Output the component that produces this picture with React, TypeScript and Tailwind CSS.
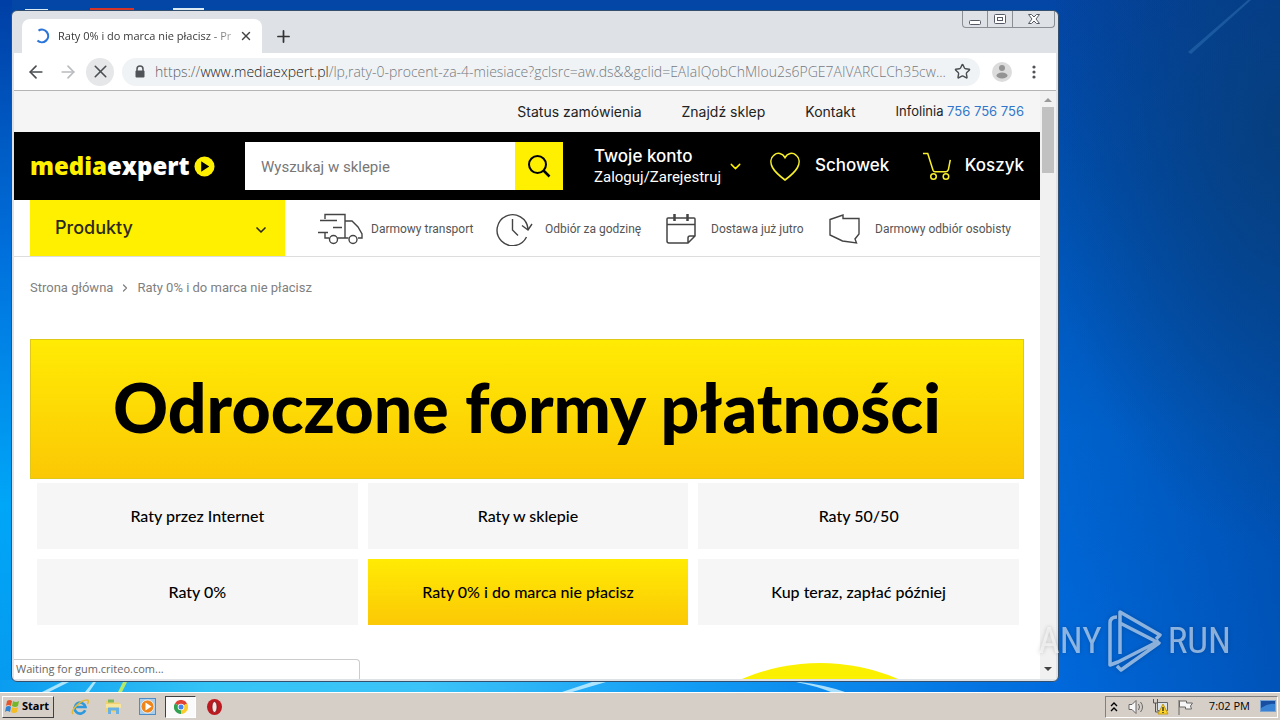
import React from 'react';
import { ArrowLeft, ArrowRight, X, Plus, Star, ChevronDown, ChevronRight } from 'lucide-react';

function Tab() {
  return (
    <div className="flex h-[34px] w-60 items-center gap-2 rounded-t-lg bg-white pl-3 pr-[9px]">
      <svg className="h-4 w-4 shrink-0" viewBox="0 0 16 16" fill="none" stroke="#2b74d8" strokeWidth="2.200">
        <path d="M4.500 2.600A6.300 6.300 0 1 1 3.500 12.500" />
      </svg>
      <span className="min-w-0 flex-1 whitespace-nowrap bg-linear-to-r from-[#333] from-85% to-[#aaa] bg-clip-text font-['Open_Sans',sans-serif] text-[11px] text-transparent">
        Raty 0% i do marca nie płacisz - Pro
      </span>
      <button aria-label="Close tab" className="shrink-0 text-[#444]">
        <X size={14} strokeWidth={2.4} />
      </button>
    </div>
  );
}

function WindowButtons() {
  return (
    <div className="flex h-[17px] rounded-b border border-t-0 border-[#8a8e95] text-[#555a66]">
      <button aria-label="Minimize" className="flex w-[25px] items-center justify-center border-r border-[#8a8e95]">
        <svg width="14" height="14" viewBox="0 0 14 14" fill="#fff" stroke="currentColor"><rect x="1.5" y="8.5" width="11" height="4" rx="1" /></svg>
      </button>
      <button aria-label="Maximize" className="flex w-[25px] items-center justify-center border-r border-[#8a8e95]">
        <svg width="14" height="14" viewBox="0 0 14 14" fill="#fff" stroke="currentColor"><rect x="1.5" y="2.5" width="11" height="9" rx="1" /><rect x="4.5" y="5.5" width="5" height="3" /></svg>
      </button>
      <button aria-label="Close" className="flex w-[41px] items-center justify-center">
        <svg width="14" height="14" viewBox="0 0 14 14" fill="#fff" stroke="currentColor"><path d="M1.5 2.5h3L7 5l2.500-2.500h3L9 7l3.500 4.500h-3L7 9l-2.500 2.500h-3L5 7z" /></svg>
      </button>
    </div>
  );
}

function Toolbar() {
  return (
    <div className="flex h-[38px] items-center border-b border-[#b4b4b4] bg-white pl-3 text-[#4a4d51]">
      <button aria-label="Back" className="flex w-8 items-center"><ArrowLeft size={20} /></button>
      <button aria-label="Forward" className="flex w-7 items-center text-[#b9bbbe]"><ArrowRight size={20} /></button>
      <button aria-label="Stop loading" className="flex h-7 w-7 items-center justify-center rounded-full bg-[#e6e7e9]"><X size={21} strokeWidth={1.8} /></button>
      <div className="ml-2 flex h-7 min-w-0 flex-1 items-center rounded-full bg-[#f0f3f5] pl-3 pr-[9px]">
        <svg width="12" height="14" viewBox="0 0 12 14" className="shrink-0">
          <path d="M3 6V4a3 3 0 0 1 6 0v2" fill="none" stroke="#505358" strokeWidth="1.500" />
          <rect x="1.500" y="5.500" width="9" height="7" rx="1" fill="#505358" />
        </svg>
        <div className="ml-[9px] min-w-0 flex-1 whitespace-nowrap font-['Open_Sans',sans-serif] text-sm font-light text-[#75797e]">
          <span className="text-[#5d6165]">https://</span>
          <span className="text-[#202124]">www.mediaexpert.pl</span>
          <span>/lp,raty-0-procent-za-4-miesiace?gclsrc=aw.ds&amp;&amp;gclid=EAIaIQobChMIou2s6PGE7AIVARCLCh35cw...</span>
        </div>
        <button aria-label="Bookmark" className="shrink-0"><Star size={17} strokeWidth={2} /></button>
      </div>
      <button aria-label="Profile" className="ml-3">
        <svg width="20" height="20" viewBox="0 0 20 20"><circle cx="10" cy="10" r="10" fill="#dcdcdc" /><circle cx="10" cy="6" r="3" fill="#949494" /><ellipse cx="10" cy="13.500" rx="5.500" ry="3" fill="#949494" /></svg>
      </button>
      <button aria-label="Menu" className="ml-[18px] mr-[18px] flex w-2 justify-center">
        <svg width="4" height="14" viewBox="0 0 4 14" fill="#505358"><circle cx="2" cy="2" r="1.600" /><circle cx="2" cy="7" r="1.600" /><circle cx="2" cy="12" r="1.600" /></svg>
      </button>
    </div>
  );
}

function TopLinks() {
  return (
    <nav className="flex h-[41px] items-center justify-end gap-10 bg-[#f5f5f5] pr-4 font-[Inter,sans-serif] text-sm text-[#222]">
      <a href="#status">Status zamówienia</a>
      <a href="#sklep">Znajdź sklep</a>
      <a href="#kontakt">Kontakt</a>
      <span className="text-[13px]">Infolinia <a href="tel:756756756" className="text-[#3077cc]">756 756 756</a></span>
    </nav>
  );
}

function Header() {
  return (
    <header className="flex h-[68px] items-center bg-black px-4 text-white">
      <a href="#home" className="flex w-[215px] items-center gap-1 font-['Open_Sans',sans-serif] text-2xl font-extrabold leading-8">
        <span><span className="text-[#fff000]">media</span>expert</span>
        <svg width="21" height="21" viewBox="0 0 22 22"><circle cx="11" cy="11" r="10.500" fill="#fff000" /><path d="M7.500 5.500v11L16 11z" fill="#000" /></svg>
      </a>
      <form className="flex h-12 flex-1 bg-white" onSubmit={(e) => e.preventDefault()}>
        <input aria-label="Wyszukaj w sklepie" placeholder="Wyszukaj w sklepie" className="min-w-0 flex-1 px-4 pt-0.5 font-[Roboto,sans-serif] text-[15px] text-black outline-none placeholder:text-[#777]" />
        <button aria-label="Szukaj" className="flex w-12 items-center justify-center bg-[#fff000] text-black">
          <svg width="24" height="24" viewBox="0 0 24 24" fill="none" stroke="currentColor" strokeWidth="2"><circle cx="10.500" cy="10.500" r="8.500" /><path d="m16.500 16.500 6 6" strokeWidth="2.500" /></svg>
        </button>
      </form>
      <a href="#konto" className="ml-[31px] flex w-[176px] items-center gap-1">
        <span className="flex w-[129px] flex-col font-[Inter,sans-serif]">
          <span className="text-[17px] font-medium leading-[21px]">Twoje konto</span>
          <span className="font-[Roboto,sans-serif] text-[15px] leading-5">Zaloguj/Zarejestruj</span>
        </span>
        <ChevronDown size={17} className="text-[#fff000]" />
      </a>
      <a href="#schowek" className="flex w-[152px] items-center gap-[15px] font-[Inter,sans-serif] text-[17px] font-medium">
        <svg width="30" height="29" viewBox="0 0 30 29" fill="none" stroke="#f7ee2c" strokeWidth="1.600"><path d="M15 5.500C12.500 1 7.500.2 4.300 2.800.8 5.500-.2 10.500 2.500 15.500 5 20 11 25 15 28c4-3 10-8 12.500-12.500 2.700-5 1.700-10-1.800-12.700C22.500.2 17.500 1 15 5.500z" /></svg>
        <span>Schowek</span>
      </a>
      <a href="#koszyk" className="flex w-[102px] items-center gap-[13px] font-[Inter,sans-serif] text-[17px] font-medium">
        <svg width="31" height="30" viewBox="0 0 31 30" fill="none" stroke="#f7ee2c" strokeWidth="1.600"><path d="M1 2h5l5.500 17.500c.4 1 1 1.500 2 1.500h11.500c1.500 0 2-.5 2.500-2L29.500 8.500" /><circle cx="12" cy="26" r="2.900" /><circle cx="25" cy="26" r="2.900" /></svg>
        <span>Koszyk</span>
      </a>
    </header>
  );
}

function FeatureBar() {
  return (
    <div className="flex h-[57px] border-b border-[#ddd] pl-4 font-[Roboto,sans-serif] text-xs text-[#555]">
      <button className="flex w-[255px] items-center justify-between bg-[#fff000] pl-[25px] pr-4 font-[Inter,sans-serif] text-lg font-medium text-[#2b2a1c]">
        Produkty <ChevronDown size={16} strokeWidth={2.5} className="mt-1" />
      </button>
      <ul className="ml-[33px] flex flex-1 items-center whitespace-nowrap pt-0.5">
        <li className="flex w-[178px] items-center gap-2">
          <svg width="45" height="32" viewBox="0 0 45 32" fill="none" stroke="#444" strokeWidth="1.400"><path d="M7 6V1.500h20V25M2 7.500h17M15 14.500h9M0 19.500h10M7 19.500V25h4M19.500 25h11M27 8h7l6 6 4 7v4h-4" /><circle cx="15.500" cy="26.500" r="4" /><circle cx="35" cy="26.500" r="4" /></svg>
          Darmowy transport
        </li>
        <li className="flex w-[170px] items-center gap-3">
          <svg width="37" height="34" viewBox="0 0 37 34" fill="none" stroke="#444" strokeWidth="1.400"><path d="M30.500 25a15.500 15.500 0 1 1 1.500-8M26 13.500l6 4.500 4-6M16.500 7v11l5.500 5.500" /></svg>
          Odbiór za godzinę
        </li>
        <li className="flex w-[163px] items-center gap-[15px]">
          <svg width="30" height="31" viewBox="0 0 30 31" fill="none" stroke="#444" strokeWidth="1.500"><path d="M22 29H3a2 2 0 0 1-2-2V5a1 1 0 0 1 1-1h26a1 1 0 0 1 1 1v17zM22 29v-5a2 2 0 0 1 2-2h5M1 10.500h28" /><path d="M8.500 0v7M21.500 0v7" strokeWidth="2.500" /></svg>
          Dostawa już jutro
        </li>
        <li className="flex items-center gap-[15px]">
          <svg width="31" height="30" viewBox="0 0 31 30" fill="none" stroke="#444" strokeWidth="1.400"><path d="M1 5.500 14 1v3.500h16V20l-4 5 1.500 4-14-2L1 21z" /></svg>
          Darmowy odbiór osobisty
        </li>
      </ul>
    </div>
  );
}

const plans = ['Raty przez Internet', 'Raty w sklepie', 'Raty 50/50', 'Raty 0%', 'Raty 0% i do marca nie płacisz', 'Kup teraz, zapłać później'];

function Page() {
  return (
    <div className="flex min-w-0 flex-1 flex-col overflow-hidden bg-white">
      <TopLinks />
      <Header />
      <FeatureBar />
      <main className="flex flex-1 flex-col px-4">
        <nav aria-label="Breadcrumb" className="flex h-[62px] items-center gap-[6px] font-[Roboto,sans-serif] text-[13px] text-[#808080]">
          <a href="#home">Strona główna</a>
          <ChevronRight size={12} strokeWidth={2.5} />
          <span>Raty 0% i do marca nie płacisz</span>
        </nav>
        <h1 className="mt-5 flex h-[140px] items-center justify-center border border-[#e0c818] bg-linear-to-b from-[#ffeb04] to-[#fbc805] pb-1 font-[Lato,sans-serif] text-[68px] font-black text-black">
          Odroczone formy płatności
        </h1>
        <div className="mt-1 grid grid-cols-3 gap-2.5 pl-[7px] pr-[5px] font-[Lato,sans-serif] text-base font-medium text-black">
          {plans.map((p, i) => (
            <a key={p} href="#raty" className={i === 4 ? 'flex h-[66px] items-center justify-center bg-linear-to-b from-[#ffeb04] to-[#fbc805]' : 'flex h-[66px] items-center justify-center bg-[#f6f6f6]'}>
              {p}
            </a>
          ))}
        </div>
        <div className="mt-auto flex justify-end pr-[126px]">
          <svg width="156" height="16" viewBox="0 0 156 16"><circle cx="78" cy="198" r="198" fill="#fbf000" /></svg>
        </div>
      </main>
    </div>
  );
}

function Scrollbar() {
  return (
    <div className="flex w-4 flex-col items-center bg-[#f1f1f1]">
      <svg width="16" height="16" viewBox="0 0 16 16"><path d="M4 11l4-4 4 4z" fill="#999" /></svg>
      <div className="h-[66px] w-3 bg-[#c1c1c1]" />
      <svg className="mt-auto" width="16" height="20" viewBox="0 0 16 20"><path d="M4 8h8l-4 4z" fill="#444" /></svg>
    </div>
  );
}

function Watermark() {
  return (
    <div className="pointer-events-none absolute bottom-[47px] right-[49px] flex h-[64px] items-center gap-1.5 font-['Roboto_Condensed','Liberation_Sans_Narrow',sans-serif] text-[37px] text-white/55 drop-shadow-[0_0_2px_rgba(0,0,0,0.35)]">
      <span>ANY</span>
      <svg width="54" height="62" viewBox="0 0 54 62" fill="none" stroke="#fff" strokeOpacity=".55" strokeWidth="3.500" strokeLinejoin="round"><path d="M9 7Q2 7 2 13V55l8-3L51 31M12 44V2l40 23-4 4M12 13l39 20-38 27-4-4" /></svg>
      <span>RUN</span>
    </div>
  );
}

function Taskbar() {
  return (
    <footer className="relative flex h-7 items-center border-t border-white bg-[#d6cfc8] pl-0.5 text-[11px] text-black">
      <button className="flex h-[22px] w-[52px] items-center gap-0.5 border border-b-[#404040] border-l-white border-r-[#404040] border-t-white pl-0.5 text-[11px] font-bold">
        <svg className="shrink-0" width="15" height="15" viewBox="0 0 15 15"><path d="M2 2q3-2 5 0l-1 5q-3-2-5 0z" fill="#e2572c" /><path d="M8 2q3 2 6 0l-1 5q-3 2-6 0z" fill="#74b72b" /><path d="M1 8q3-2 5 0l-1 5q-3-2-5 0z" fill="#2e84d2" /><path d="M7 8q3 2 6 0l-1 5q-3 2-6 0z" fill="#f5bd24" /></svg>
        Start
      </button>
      <button aria-label="Internet Explorer" className="ml-[17px]">
        <svg width="18" height="18" viewBox="0 0 18 18" fill="none"><path d="M14.200 12.200A5.500 5.500 0 1 1 14.500 9H5" stroke="#2d98dc" strokeWidth="2.600" /><path d="M2 16C-1 13 9 2 16 2c2 0 1.500 2 .5 4" stroke="#e3b935" strokeWidth="1.500" /></svg>
      </button>
      <button aria-label="Explorer" className="ml-4">
        <svg width="17" height="17" viewBox="0 0 17 17"><path d="M1 3h6l1 1.500h7V14H1z" fill="#efd16f" /><path d="M3 1.500h6v3H3z" fill="#7db85a" /><path d="M1 6h15v4H1z" fill="#f7e59b" /><path d="M3 16V9.500h11V16h-3v-3.500H6V16z" fill="#69b1e2" /></svg>
      </button>
      <button aria-label="Media Player" className="ml-[17px]">
        <svg width="17" height="17" viewBox="0 0 17 17"><rect x=".5" y=".5" width="16" height="16" fill="#a9cdec" stroke="#4d8dc7" /><circle cx="8.500" cy="8.500" r="6.500" fill="#ef861c" stroke="#fff" strokeWidth=".7" /><path d="M6.500 4.500v8l6-4z" fill="#fff" /></svg>
      </button>
      <button aria-label="Chrome" className="ml-[9px] flex h-[22px] w-[31px] items-center justify-center border border-b-white border-l-[#404040] border-r-white border-t-[#404040] bg-[#fafafa]">
        <svg width="14" height="14" viewBox="0 0 14 14"><path d="M7 7 .9 3.500A7 7 0 0 1 13.100 3.500z" fill="#e04336" /><path d="M7 7 13.100 3.500A7 7 0 0 1 7 14z" fill="#fccc2e" /><path d="M7 7v7A7 7 0 0 1 .9 3.500z" fill="#31a150" /><circle cx="7" cy="7" r="3.300" fill="#fff" /><circle cx="7" cy="7" r="2.500" fill="#4484ec" /></svg>
      </button>
      <button aria-label="Opera" className="ml-[11px]">
        <svg width="15" height="16" viewBox="0 0 15 16"><ellipse cx="7.500" cy="8" rx="7.500" ry="8" fill="#bd1920" /><ellipse cx="7.500" cy="8" rx="2.500" ry="5.500" fill="#f4e5e5" stroke="#730c10" strokeWidth=".7" /></svg>
      </button>
      <div className="ml-auto mr-0.5 flex h-[22px] items-center border border-b-white border-l-[#808080] border-r-white border-t-[#808080] pl-1">
        <svg width="8" height="12" viewBox="0 0 8 12" fill="none" stroke="#000" strokeWidth="1.400"><path d="m1 5 3-3 3 3M1 10l3-3 3 3" /></svg>
        <svg className="ml-2.5" width="17" height="16" viewBox="0 0 17 16" fill="#f8f8f8" stroke="#666"><path d="M1 5.500h3l4-4v13l-4-4H1z" /><path d="M10.500 5q2 3 0 6M12.500 3q4 5 0 10" fill="none" /></svg>
        <svg className="ml-[7px]" width="17" height="17" viewBox="0 0 17 17"><path d="M5.500 4.500h10v8h-10z" fill="#dce4ec" stroke="#666" /><path d="M1.500 1v4h4V1M3.500 5v9h5" fill="none" stroke="#555" /><path d="m11 6 5 10H6z" fill="#fdd52a" stroke="#c59a13" /><path d="M11 9v4M11 14v1" stroke="#222" strokeWidth="1.300" /></svg>
        <svg className="ml-2" width="17" height="16" viewBox="0 0 17 16" fill="#f6f6f6" stroke="#666"><path d="M2 1v15M2.500 2h7v2h6l-2 3 1 3h-6V8h-6z" /></svg>
        <time className="ml-[15px] font-['Open_Sans',sans-serif]">7:02 PM</time>
        <svg className="ml-2.5 mr-px" width="16" height="13" viewBox="0 0 16 13"><rect x=".5" y=".5" width="15" height="11" fill="#174ea2" stroke="#7aa3d2" /><path d="M1 8q7-5 14-4v7H1z" fill="#3a83d4" /></svg>
      </div>
    </footer>
  );
}

export default function App() {
  return (
    <div className="relative flex min-h-screen flex-col overflow-hidden bg-[radial-gradient(ellipse_240px_420px_at_100%_18%,rgba(8,62,120,0.800),transparent),linear-gradient(90deg,transparent_82%,rgba(0,50,130,0.400)_100%),linear-gradient(180deg,#0346a5_0%,#0050b0_24%,#0064d0_60%,#006ade_100%)] font-['Noto_Sans',sans-serif]">
      <svg className="absolute inset-0 h-full w-full" preserveAspectRatio="none" viewBox="0 0 1280 720">
        <defs>
          <linearGradient id="left" x2="0" y2="1"><stop stopColor="#003fa5" /><stop offset=".35" stopColor="#0070dc" /><stop offset=".7" stopColor="#00a6f8" /><stop offset="1" stopColor="#0798ee" /></linearGradient>
          <linearGradient id="bottom"><stop stopColor="#0a9cf0" /><stop offset=".2" stopColor="#35c4f6" /><stop offset=".4" stopColor="#3cc3f8" /><stop offset=".65" stopColor="#129cf5" /><stop offset="1" stopColor="#0069dc" /></linearGradient>
        </defs>
        <rect width="12" height="720" fill="url(#left)" />
        <rect y="680" width="1060" height="14" fill="url(#bottom)" />
        <path d="M42 692l20-10h7l-20 10zM85 692l8-10h3l-7 10zM562 692l30-10h14l-34 10zM800 682q25 3 45 10h-14q-15-6-35-10z" fill="#c5eeff" opacity=".85" />
        <path d="M118 692l5-10h4l-5 10z" fill="#b6e86a" />
        <path d="M1188 52l60-52h3l-60 54z" fill="#3d7fc0" opacity=".4" />
        <path d="M90 8h44v3H90z" fill="#d63427" /><path d="M173 8h31v3h-31zM25 9h23v2H25z" fill="#dceaf4" />
      </svg>
      <div className="relative flex flex-1 pb-2.5 pl-[11px] pr-[221px] pt-2.5">
        <section className="flex min-w-0 flex-1 flex-col rounded-md border border-[#34506e] bg-[#dee1e6] px-0.5 pb-0.5">
          <div className="flex h-[42px] items-start justify-between pl-2 pr-px">
            <div className="flex items-center self-end">
              <Tab />
              <button aria-label="New tab" className="ml-3 text-[#333]"><Plus size={19} strokeWidth={2.200} /></button>
            </div>
            <WindowButtons />
          </div>
          <Toolbar />
          <div className="relative flex flex-1">
            <Page />
            <Scrollbar />
            <div className="absolute bottom-0 left-0 h-5 w-[346px] rounded-tr border border-b-0 border-l-0 border-[#ccc] bg-white pl-0.5 font-['Open_Sans',sans-serif] text-[11px] leading-[18px] text-[#666]">Waiting for gum.criteo.com...</div>
          </div>
        </section>
      </div>
      <Taskbar />
      <Watermark />
    </div>
  );
}
